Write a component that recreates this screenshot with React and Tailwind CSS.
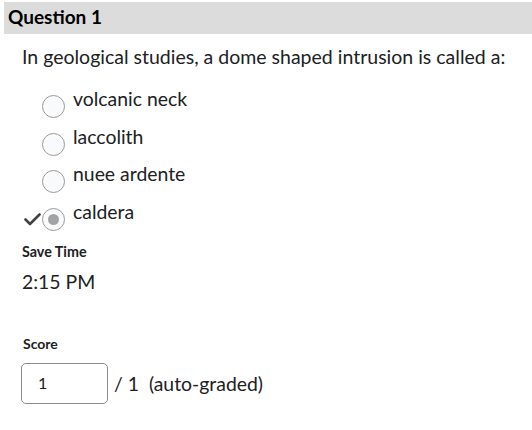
import React from "react";

const font = { fontFamily: "Lato, 'Noto Sans', sans-serif" };

function Radio({ checked }) {
  return (
    <span className="mt-[8px] flex h-[23px] w-[23px] shrink-0 items-center justify-center rounded-full border border-[#9a9a9a] bg-[#f9fafb]">
      {checked && <span className="h-[11px] w-[11px] rounded-full bg-[#a3a3a3]" />}
    </span>
  );
}

function Option({ label, checked }) {
  return (
    <div className="flex h-[37.7px] items-start">
      <span className="mt-[12px] flex h-[14px] w-[20px] items-center justify-center">
        {checked && (
          <svg width="17" height="13" viewBox="0 0 17 13">
            <path d="M1.5 6.5 L6 11 L15.5 1.5" fill="none" stroke="#404244" strokeWidth="2.6" strokeLinecap="round" strokeLinejoin="round" />
          </svg>
        )}
      </span>
      <Radio checked={checked} />
      <span className="ml-[8px] text-[19.4px] leading-[23px] text-[#202122]">{label}</span>
    </div>
  );
}

export default function App() {
  return (
    <div className="h-[430px] w-[532px] bg-white text-[#202122]" style={font}>
      <div className="pl-[4px] pt-[2px]">
        <div className="flex h-[32px] items-center bg-[#dcdcdc] pb-[2px] pl-[4px] text-[19px] font-bold text-black">
          Question 1
        </div>
      </div>
      <div className="pl-[22px] pt-[11px] text-[19.5px] leading-[23px]">
        In geological studies, a dome shaped intrusion is called a:
      </div>
      <div className="pl-[22px] pt-[19px]">
        <Option label="volcanic neck" />
        <Option label="laccolith" />
        <Option label="nuee ardente" />
        <Option label="caldera" checked />
      </div>
      <div className="pl-[22px] pt-[5px] text-[14.3px] font-bold leading-[17px]">Save Time</div>
      <div className="pl-[22px] pt-[10px] text-[19.4px] leading-[23px]">2:15 PM</div>
      <div className="pl-[23px] pt-[42px] text-[14px] font-bold leading-[17px]">Score</div>
      <div className="flex items-center pl-[21px] pt-[11px]">
        <div className="flex h-[41px] w-[87px] items-center rounded-[5px] border border-[#8c8c8c] pl-[16px] text-[16px]">
          1
        </div>
        <span className="ml-[6px] text-[19.4px]">/ 1&nbsp;&nbsp;(auto-graded)</span>
      </div>
    </div>
  );
}
